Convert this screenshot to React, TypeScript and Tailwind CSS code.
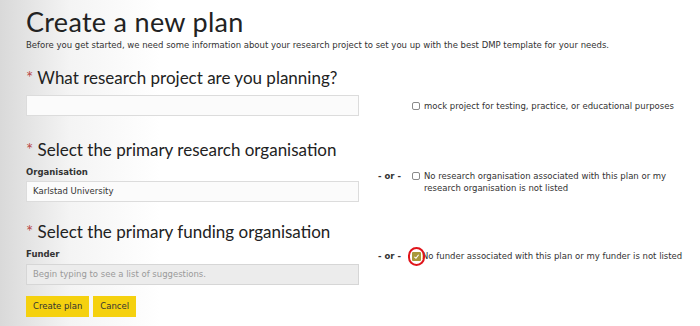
import React from "react";

const body = { fontFamily: '"DejaVu Sans", Verdana, sans-serif' };
const head = { fontFamily: 'Lato, "Open Sans", sans-serif' };

function Box({ checked = false }: { checked?: boolean }) {
  if (checked) {
    return (
      <span className="relative mt-[2px] inline-flex h-[9px] w-[9px] shrink-0 items-center justify-center rounded-[1px] bg-[#a8993a]">
        <svg width="7" height="7" viewBox="0 0 10 10">
          <path d="M2 5.5 L4.2 7.5 L8 2.5" stroke="#fff" strokeWidth="1.6" fill="none" />
        </svg>
        <span className="absolute left-[-4px] top-[-5px] h-[19px] w-[17px] rounded-full border-2 border-[#e0141b]" />
      </span>
    );
  }
  return <span className="mt-[2px] inline-block h-[8px] w-[8px] shrink-0 rounded-[2px] border border-[#8a8a8a] bg-white" />;
}

function Heading({ children }: { children: React.ReactNode }) {
  return (
    <h2 className="text-[17px] leading-[24px] text-[#222]" style={head}>
      <span className="text-[#b94a48]">*</span> {children}
    </h2>
  );
}

export default function App() {
  return (
    <div
      className="h-[326px] w-[700px] overflow-hidden bg-[linear-gradient(to_right,#d9d9d9_0px,#f4f4f4_70px,#ffffff_160px)] pl-[26px] pt-[6px] text-[#333]"
      style={body}
    >
      <h1 className="text-[27px] leading-[32px] tracking-[0.3px] text-[#222]" style={head}>
        Create a new plan
      </h1>
      <p className="mt-[1px] text-[8.5px] leading-[12px]">
        Before you get started, we need some information about your research project to set you up with the best DMP template for your needs.
      </p>

      <div className="mt-[15px]">
        <Heading>What research project are you planning?</Heading>
        <div className="mt-[5px] flex items-center">
          <div className="h-[21px] w-[333px] border border-[#dcdcdc] bg-[#fbfbfb]" />
          <label className="ml-[53px] flex items-start gap-[4px] text-[8.5px] leading-[12px]">
            <Box />
            <span>mock project for testing, practice, or educational purposes</span>
          </label>
        </div>
      </div>

      <div className="mt-[22px]">
        <Heading>Select the primary research organisation</Heading>
        <div className="flex items-start">
          <div className="w-[333px]">
            <div className="mt-[4px] text-[8.5px] font-bold leading-[12px]">Organisation</div>
            <div className="mt-[3px] flex h-[21px] items-center border border-[#dcdcdc] bg-[#fbfbfb] px-[6px] text-[8.5px]">
              Karlstad University
            </div>
          </div>
          <div className="ml-[19px] mt-[8px] flex items-start text-[8.5px] leading-[12px]">
            <span className="w-[34px] font-bold">- or -</span>
            <Box />
            <span className="ml-[4px] w-[250px]">
              No research organisation associated with this plan or my research organisation is not listed
            </span>
          </div>
        </div>
      </div>

      <div className="mt-[18px]">
        <Heading>Select the primary funding organisation</Heading>
        <div className="flex items-start">
          <div className="w-[333px]">
            <div className="mt-[4px] text-[8.5px] font-bold leading-[12px]">Funder</div>
            <div className="mt-[4px] flex h-[21px] items-center border border-[#d6d6d6] bg-[#ececec] px-[6px] text-[8.5px] text-[#9a9a9a]">
              Begin typing to see a list of suggestions.
            </div>
          </div>
          <div className="ml-[19px] mt-[6px] flex items-start text-[8.5px] leading-[12px]">
            <span className="w-[34px] font-bold">- or -</span>
            <Box checked />
            <span className="ml-[1px]">No funder associated with this plan or my funder is not listed</span>
          </div>
        </div>
      </div>

      <div className="mt-[11px] flex gap-[4px]">
        <button className="h-[21px] bg-[#f5d10f] px-[7px] text-[8.5px] text-[#333]">Create plan</button>
        <button className="h-[21px] bg-[#f5d10f] px-[7px] text-[8.5px] text-[#333]">Cancel</button>
      </div>
    </div>
  );
}
